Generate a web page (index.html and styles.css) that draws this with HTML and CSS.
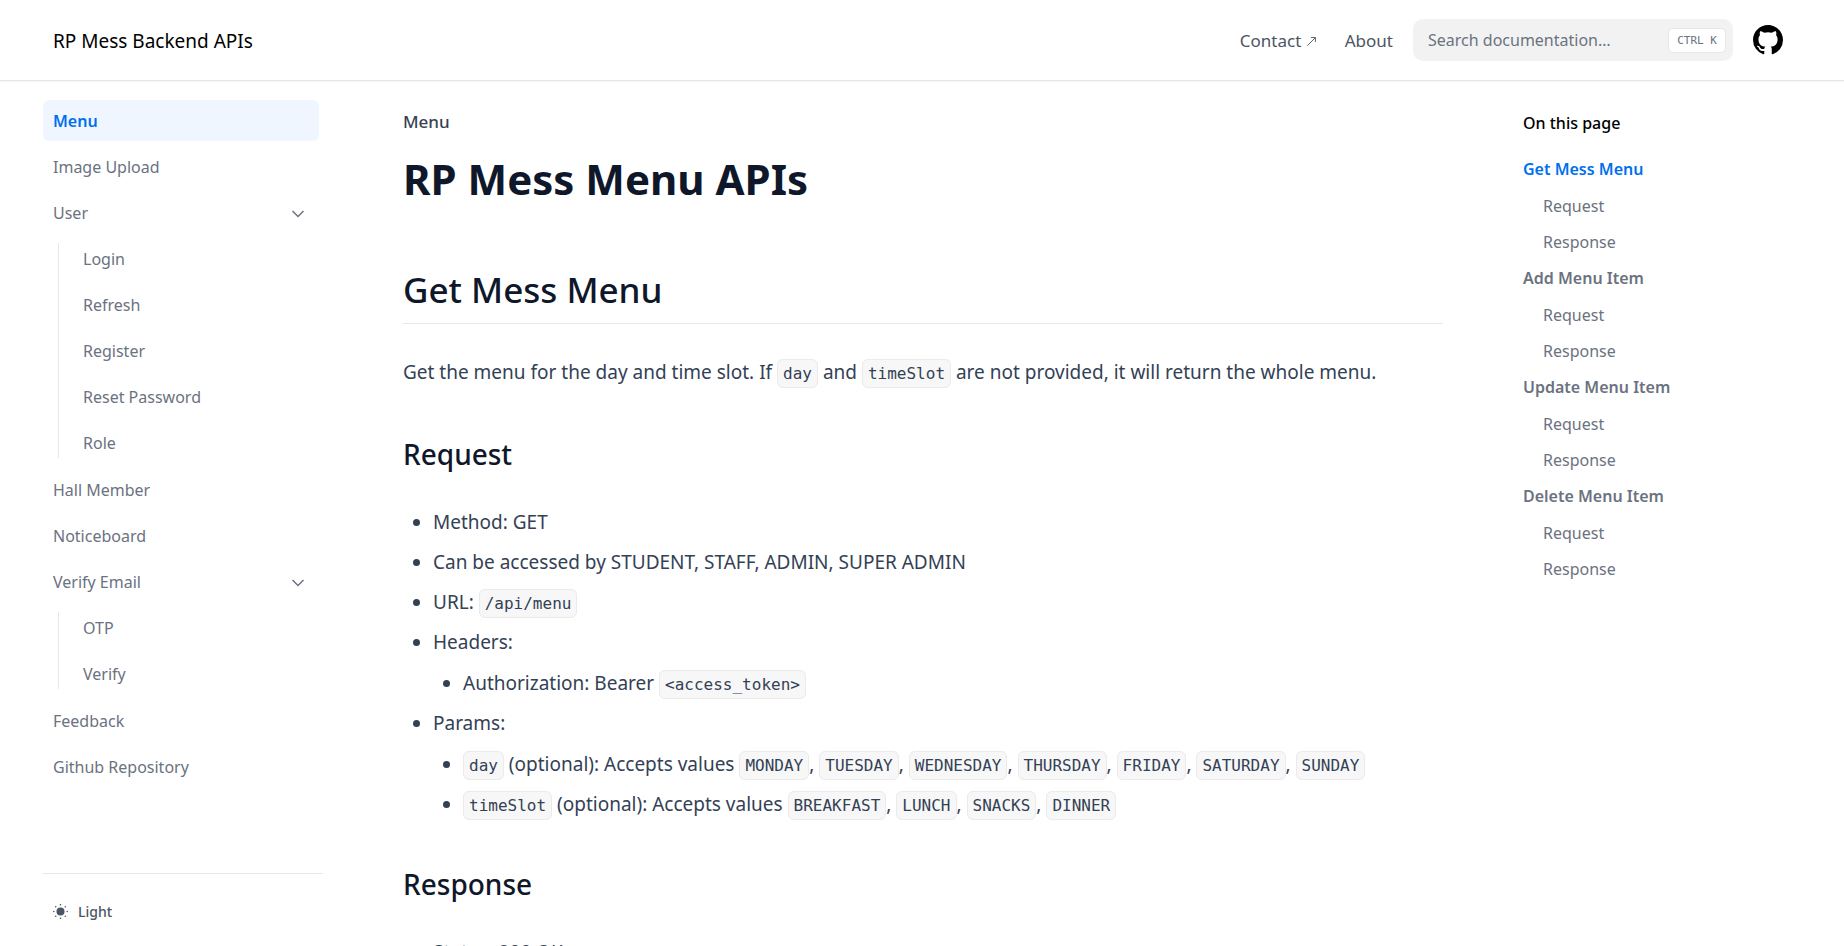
FILE: index.html
```html
<!DOCTYPE html>
<html lang="en">
<head>
<meta charset="utf-8">
<meta name="viewport" content="width=device-width, initial-scale=1">
<title>RP Mess Menu APIs</title>
<link rel="stylesheet" href="styles.css">
</head>
<body>
<header class="topbar">
  <nav class="topbar-inner" aria-label="Main">
    <a class="brand" href="#">RP Mess Backend APIs</a>
    <a class="top-link" href="#">Contact <svg class="arrow" viewBox="0 0 12 12" aria-hidden="true"><path d="M1.5 10.5 10 2M5.5 1.7h4.8v4.8" fill="none" stroke="currentColor"/></svg></a>
    <a class="top-link" href="#">About</a>
    <label class="search">
      <input type="search" placeholder="Search documentation…" aria-label="Search documentation">
      <kbd>CTRL K</kbd>
    </label>
    <a class="github" href="#" aria-label="GitHub"><svg viewBox="2 2 20 20" aria-hidden="true"><path fill="currentColor" d="M12 2C6.475 2 2 6.475 2 12a9.994 9.994 0 0 0 6.838 9.488c.5.087.687-.213.687-.476 0-.237-.013-1.024-.013-1.862-2.512.463-3.162-.612-3.362-1.175-.113-.288-.6-1.175-1.025-1.413-.35-.187-.85-.65-.013-.662.788-.013 1.35.725 1.538 1.025.9 1.512 2.338 1.087 2.912.825.088-.65.35-1.087.638-1.337-2.225-.25-4.55-1.113-4.55-4.938 0-1.088.387-1.987 1.025-2.688-.1-.25-.45-1.275.1-2.65 0 0 .837-.262 2.75 1.026a9.28 9.28 0 0 1 2.5-.338c.85 0 1.7.112 2.5.337 1.912-1.3 2.75-1.024 2.75-1.024.55 1.375.2 2.4.1 2.65.637.7 1.025 1.587 1.025 2.687 0 3.838-2.337 4.688-4.562 4.938.362.312.675.912.675 1.85 0 1.337-.013 2.412-.013 2.75 0 .262.188.574.688.474A10.016 10.016 0 0 0 22 12c0-5.525-4.475-10-10-10z"/></svg></a>
  </nav>
</header>
<div class="layout">
  <aside class="sidebar">
    <ul class="side-list">
      <li><a class="active" href="#">Menu</a></li>
      <li><a href="#">Image Upload</a></li>
      <li>
        <button type="button">User <svg class="chevron" viewBox="0 0 14 14" aria-hidden="true"><path d="M1.5 4 7 9.500 12.500 4" fill="none" stroke="currentColor" stroke-width="1.500"/></svg></button>
        <ul class="sub-list">
          <li><a href="#">Login</a></li>
          <li><a href="#">Refresh</a></li>
          <li><a href="#">Register</a></li>
          <li><a href="#">Reset Password</a></li>
          <li><a href="#">Role</a></li>
        </ul>
      </li>
      <li><a href="#">Hall Member</a></li>
      <li><a href="#">Noticeboard</a></li>
      <li>
        <button type="button">Verify Email <svg class="chevron" viewBox="0 0 14 14" aria-hidden="true"><path d="M1.500 4 7 9.500 12.500 4" fill="none" stroke="currentColor" stroke-width="1.500"/></svg></button>
        <ul class="sub-list">
          <li><a href="#">OTP</a></li>
          <li><a href="#">Verify</a></li>
        </ul>
      </li>
      <li><a href="#">Feedback</a></li>
      <li><a href="#">Github Repository</a></li>
    </ul>
    <div class="side-footer">
      <button class="theme" type="button"><svg viewBox="0 0 15 15" aria-hidden="true"><circle cx="7.500" cy="7.500" r="4" fill="currentColor"/><g fill="currentColor"><circle cx="7.500" cy=".8" r=".8"/><circle cx="7.500" cy="14.200" r=".8"/><circle cx=".8" cy="7.500" r=".8"/><circle cx="14.200" cy="7.500" r=".8"/><circle cx="2.700" cy="2.700" r=".8"/><circle cx="12.300" cy="2.700" r=".8"/><circle cx="2.700" cy="12.300" r=".8"/><circle cx="12.300" cy="12.300" r=".8"/></g></svg>Light</button>
    </div>
  </aside>
  <main class="article">
    <div class="crumb">Menu</div>
    <h1>RP Mess Menu APIs</h1>
    <h2>Get Mess Menu</h2>
    <p>Get the menu for the day and time slot. If <code>day</code> and <code>timeSlot</code> are not provided, it will return the whole menu.</p>
    <h3>Request</h3>
    <ul>
      <li>Method: GET</li>
      <li>Can be accessed by STUDENT, STAFF, ADMIN, SUPER ADMIN</li>
      <li>URL: <code>/api/menu</code></li>
      <li>Headers:
        <ul>
          <li>Authorization: Bearer <code>&lt;access_token&gt;</code></li>
        </ul>
      </li>
      <li>Params:
        <ul>
          <li><code>day</code> (optional): Accepts values <code>MONDAY</code>, <code>TUESDAY</code>, <code>WEDNESDAY</code>, <code>THURSDAY</code>, <code>FRIDAY</code>, <code>SATURDAY</code>, <code>SUNDAY</code></li>
          <li><code>timeSlot</code> (optional): Accepts values <code>BREAKFAST</code>, <code>LUNCH</code>, <code>SNACKS</code>, <code>DINNER</code></li>
        </ul>
      </li>
    </ul>
    <h3>Response</h3>
    <ul>
      <li>Status: 200 OK</li>
    </ul>
  </main>
  <nav class="toc" aria-labelledby="toc-title">
    <p id="toc-title">On this page</p>
    <ul>
      <li class="section current"><a href="#">Get Mess Menu</a></li>
      <li><a href="#">Request</a></li>
      <li><a href="#">Response</a></li>
      <li class="section"><a href="#">Add Menu Item</a></li>
      <li><a href="#">Request</a></li>
      <li><a href="#">Response</a></li>
      <li class="section"><a href="#">Update Menu Item</a></li>
      <li><a href="#">Request</a></li>
      <li><a href="#">Response</a></li>
      <li class="section"><a href="#">Delete Menu Item</a></li>
      <li><a href="#">Request</a></li>
      <li><a href="#">Response</a></li>
    </ul>
  </nav>
</div>
</body>
</html>
```
FILE: styles.css
```css
*, *::before, *::after { box-sizing: border-box; }

body {
  margin: 0;
  height: 100vh;
  display: flex;
  flex-direction: column;
  background: #fff;
  color: #334155;
  font-family: "Noto Sans", "Open Sans", sans-serif;
  font-size: 19px;
  line-height: 35px;
}

a { color: inherit; text-decoration: none; }
button { border: 0; background: none; color: inherit; font: inherit; cursor: pointer; }

/* Top bar */
.topbar {
  flex: none;
  border-bottom: 1px solid #e7e7e7;
  box-shadow: 0 1px 1px #00000008;
}
.topbar-inner {
  display: flex;
  align-items: center;
  max-width: 1800px;
  height: 80px;
  margin: 0 auto;
  padding: 0 39px 0 31px;
}
.brand { margin-right: auto; padding-top: 2px; color: #000; }
.top-link { margin-right: 28px; color: #4b5563; font-size: 17px; }
.top-link + .top-link { margin-right: 20px; }
.arrow { width: 11px; height: 11px; }
.search {
  display: flex;
  align-items: center;
  width: 320px;
  height: 42px;
  padding: 0 7px 0 15px;
  border-radius: 10px;
  background: #f2f2f2;
}
.search input {
  flex: 1;
  min-width: 0;
  padding: 0;
  border: 0;
  outline: 0;
  background: none;
  color: #374151;
  font: 16px "Noto Sans", sans-serif;
}
.search input::placeholder { color: #6b7280; opacity: 1; }
.search kbd {
  padding: 0 8px;
  border: 1px solid #e5e7eb;
  border-radius: 5px;
  background: #fff;
  color: #6b7280;
  font: 500 11px/23px "DejaVu Sans Mono", monospace;
}
.github { display: flex; margin-left: 20px; color: #000; }
.github svg { width: 30px; height: 30px; }

/* Page columns */
.layout {
  flex: 1;
  min-height: 0;
  display: grid;
  grid-template-columns: 320px minmax(0, 1fr) 320px;
  width: 100%;
  max-width: 1800px;
  margin: 0 auto;
}

/* Sidebar */
.sidebar {
  display: flex;
  flex-direction: column;
  min-height: 0;
  padding: 19px 19px 0 21px;
  color: #6b7280;
  font-size: 16px;
  line-height: 25px;
}
.side-list {
  flex: 1;
  min-height: 0;
  margin: 0;
  padding: 0 4px 0 0;
  overflow: hidden;
  list-style: none;
}
.side-list > li, .sub-list > li { margin-bottom: 5px; }
.side-list a, .side-list button {
  display: flex;
  align-items: center;
  justify-content: space-between;
  width: 100%;
  padding: 9px 10px 7px;
  border-radius: 6px;
  text-align: left;
}
.side-list .active { background: #eff6ff; color: #006fee; font-weight: 600; }
.chevron { width: 14px; height: 14px; margin-right: 4px; }
.sub-list {
  position: relative;
  margin: 5px 0 6px 15px;
  padding: 0 0 0 15px;
  list-style: none;
}
.sub-list::before {
  content: "";
  position: absolute;
  top: 5px;
  bottom: 5px;
  left: 0;
  width: 1px;
  background: #e5e7eb;
}
.sub-list > li:last-child { margin-bottom: 0; }
.side-footer { padding: 20px 0 17px; border-top: 1px solid #e5e7eb; }
.theme {
  display: flex;
  align-items: center;
  gap: 10px;
  padding: 5px 10px;
  color: #4b5563;
  font-size: 14px;
  font-weight: 500;
  line-height: 25px;
}
.theme svg { width: 15px; height: 15px; }

/* Article */
.article { min-height: 0; padding: 28px 59px 0 61px; overflow: hidden; }
.crumb { color: #374151; font-size: 17px; font-weight: 500; line-height: 25px; }
h1, h2, h3 { margin: 0; color: #0f172a; line-height: 50px; }
h1 { margin-top: 20px; font-size: 42px; font-weight: 700; }
h2 {
  margin-top: 61px;
  padding-bottom: 8px;
  border-bottom: 1px solid #e8e8e9;
  font-size: 35px;
  font-weight: 500;
}
h3 { margin-top: 39px; font-size: 28px; font-weight: 500; }
.article p { margin: 31px 0 0; }
.article ul { margin: 26px 0 0; padding-left: 30px; list-style: disc; }
.article li { margin-top: 5px; }
.article ul ul { margin-top: 6px; }
.article > ul > li:first-child { margin-top: 0; }
.article ul + h3 { margin-top: 37px; }
.article code {
  padding: 4px 5px;
  border: 1px solid #ebebeb;
  border-radius: 6px;
  background: #f7f7f7;
  font: 16px/19px "DejaVu Sans Mono", monospace;
}

/* Table of contents */
.toc { padding: 29px 20px 0 21px; color: #6b7280; font-size: 16px; line-height: 26px; }
.toc p { margin: 0 0 20px; color: #000; font-weight: 500; }
.toc ul { margin: 0; padding: 0; list-style: none; }
.toc li { margin-bottom: 10px; padding-left: 20px; }
.toc .section { margin-bottom: 11px; padding-left: 0; font-weight: 600; }
.toc .current { color: #006fee; }
```
